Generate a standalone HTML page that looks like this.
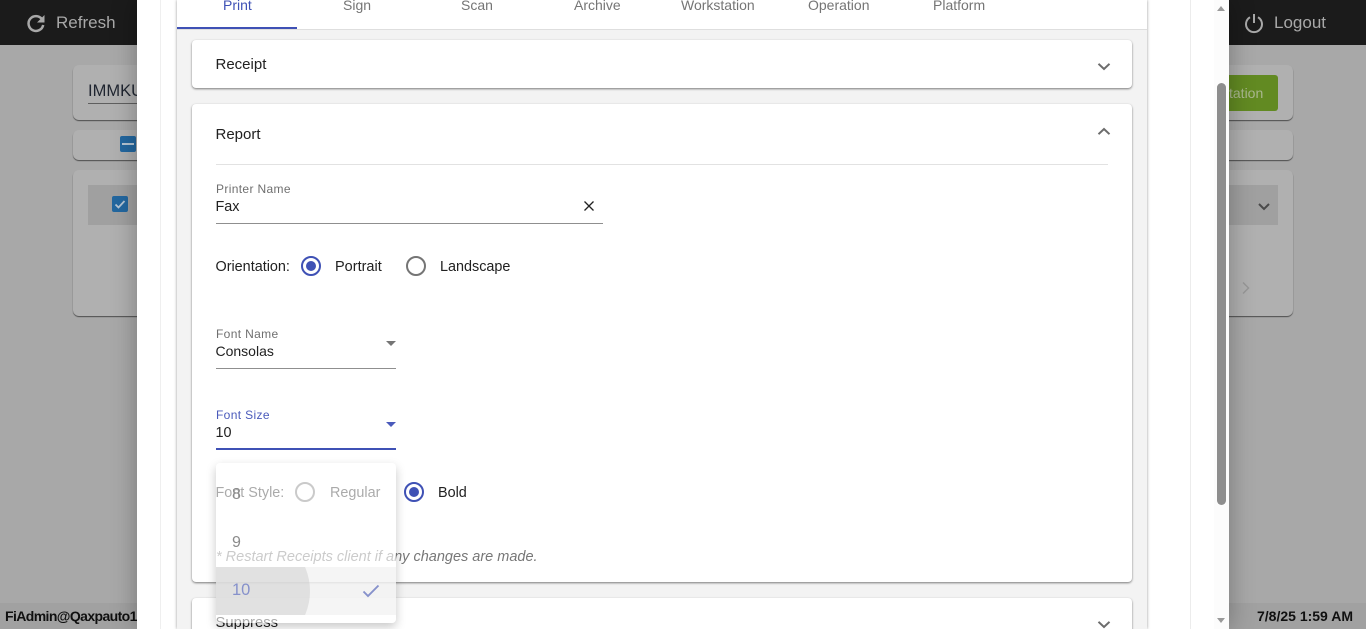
<!DOCTYPE html>
<html>
<head>
<meta charset="utf-8">
<style>
html,body{margin:0;padding:0;width:1366px;height:629px;overflow:hidden;background:#a8a8a8;}
body{position:relative;font-family:"Liberation Sans",sans-serif;color:#212121;font-size:14.4px;}
.a{position:absolute;}
.t{position:absolute;white-space:nowrap;line-height:18px;}
.card{position:absolute;background:#fff;border-radius:4px;box-shadow:0 1px 2px rgba(0,0,0,.5);}
.bgcard{position:absolute;background:#b0b0b0;border-radius:6px;box-shadow:0 1px 1px rgba(0,0,0,.55);}
.tab{position:absolute;top:-4px;white-space:nowrap;line-height:18px;color:#757575;font-size:14px;}
.lab{position:absolute;white-space:nowrap;font-size:12px;line-height:14px;color:#6f6f6f;letter-spacing:.35px;}
svg{position:absolute;overflow:visible;}
</style>
</head>
<body>
<!-- background app -->
<div class="a" style="left:0;top:0;width:1366px;height:45px;background:#1b1b1b;"></div>
<svg style="left:26px;top:13px" width="20" height="20" viewBox="0 0 20 20" fill="none"><path d="M15.800 6A7.400 7.400 0 1 0 17.200 12" stroke="#a8a8a8" stroke-width="2.500"/><path d="M18.500 2V9.500H11Z" fill="#a8a8a8"/></svg>
<div class="t" style="left:56px;top:14px;font-size:17px;color:#a8a8a8;">Refresh</div>
<svg style="left:1244px;top:13px" width="20" height="20" viewBox="0 0 20 20" fill="none"><path d="M10 1V10" stroke="#a8a8a8" stroke-width="2"/><path d="M6 4.200A8 8 0 1 0 14 4.200" stroke="#a8a8a8" stroke-width="2"/></svg>
<div class="t" style="left:1274px;top:14px;font-size:17px;color:#a8a8a8;">Logout</div>

<div class="bgcard" style="left:73px;top:65px;width:1220px;height:55px;"></div>
<div class="t" style="left:88px;top:82px;font-size:16.500px;color:#1f2530;">IMMKU</div>
<div class="a" style="left:88px;top:103px;width:60px;height:1px;background:#5f5f5f;"></div>
<div class="a" style="left:1200px;top:75px;width:78px;height:36px;background:#628a22;border-radius:3px;"></div>
<div class="t" style="left:1229px;top:84px;font-size:14px;color:#a9b78f;">tation</div>

<div class="bgcard" style="left:73px;top:130px;width:1220px;height:30px;"></div>
<div class="a" style="left:120px;top:136px;width:16px;height:16px;background:#23679f;border-radius:2px;"></div>
<div class="a" style="left:122px;top:143px;width:12px;height:2px;background:#b5c5d3;"></div>

<div class="bgcard" style="left:73px;top:170px;width:1220px;height:146px;"></div>
<div class="a" style="left:88px;top:185px;width:1190px;height:40px;background:#a0a0a0;"></div>
<div class="a" style="left:112px;top:196px;width:16px;height:16px;background:#23679f;border-radius:2px;"></div>
<svg style="left:112px;top:196px" width="16" height="16" viewBox="0 0 16 16" fill="none"><path d="M3.500 8.500L6.500 11.500L12.500 5" stroke="#b5c5d3" stroke-width="1.800"/></svg>
<svg style="left:1257px;top:202px" width="14" height="10" viewBox="0 0 14 10" fill="none"><path d="M2 2L7 7L12 2" stroke="#4a4a4a" stroke-width="2"/></svg>
<svg style="left:1241px;top:281px" width="10" height="14" viewBox="0 0 10 14" fill="none"><path d="M2 1.500L7.500 7L2 12.500" stroke="#979797" stroke-width="1.500"/></svg>

<div class="a" style="left:0;top:603px;width:1366px;height:26px;background:rgba(0,0,0,.04);"></div>
<div class="t" style="left:5px;top:607px;font-size:14px;font-weight:bold;color:#101010;letter-spacing:-.6px;">FiAdmin@Qaxpauto1.</div>
<div class="t" style="left:1257px;top:607px;font-size:14px;font-weight:bold;color:#101010;letter-spacing:0;">7/8/25 1:59 AM</div>

<!-- dialog -->
<div class="a" style="left:137px;top:0;width:1092px;height:629px;background:#fff;box-shadow:0 0 24px rgba(0,0,0,.3);"></div>
<div class="a" style="left:160px;top:0;width:1px;height:629px;background:#efefef;"></div>
<div class="a" style="left:1190px;top:0;width:1px;height:629px;background:#ececec;"></div>
<!-- scrollbar -->
<div class="a" style="left:1214px;top:0;width:15px;height:629px;background:#fcfcfc;"></div>
<div class="a" style="left:1217px;top:83px;width:9px;height:422px;background:#8e8e8e;border-radius:5px;"></div>
<div class="a" style="left:1217px;top:6px;width:0;height:0;border-left:4.500px solid transparent;border-right:4.500px solid transparent;border-bottom:5px solid #9a9a9a;"></div>
<div class="a" style="left:1217px;top:618px;width:0;height:0;border-left:4.500px solid transparent;border-right:4.500px solid transparent;border-top:5px solid #9a9a9a;"></div>

<!-- panel -->
<div class="a" style="left:177px;top:0;width:970px;height:629px;background:#f3f3f3;box-shadow:0 0 3px rgba(0,0,0,.4);"></div>
<div class="a" style="left:177px;top:0;width:970px;height:29px;background:#fff;border-bottom:1px solid #dedede;"></div>
<div class="a" style="left:177px;top:27px;width:120px;height:2px;background:#3f51b5;"></div>
<div class="tab" style="left:223px;color:#3f51b5;">Print</div>
<div class="tab" style="left:343px;">Sign</div>
<div class="tab" style="left:461px;">Scan</div>
<div class="tab" style="left:574px;">Archive</div>
<div class="tab" style="left:681px;">Workstation</div>
<div class="tab" style="left:808px;">Operation</div>
<div class="tab" style="left:933px;">Platform</div>

<!-- receipt -->
<div class="card" style="left:192px;top:40px;width:940px;height:48px;"></div>
<div class="t" style="left:215.500px;top:56px;font-size:15px;">Receipt</div>
<svg style="left:1097px;top:62px" width="14" height="10" viewBox="0 0 14 10" fill="none"><path d="M1.500 1.800L7 7L12.500 1.800" stroke="#6c6c6c" stroke-width="2"/></svg>

<!-- report -->
<div class="card" style="left:192px;top:104px;width:940px;height:478px;"></div>
<div class="t" style="left:215.500px;top:126px;font-size:15px;">Report</div>
<svg style="left:1097px;top:127px" width="14" height="10" viewBox="0 0 14 10" fill="none"><path d="M1.500 7.200L7 2L12.500 7.200" stroke="#6c6c6c" stroke-width="2"/></svg>
<div class="a" style="left:216px;top:164px;width:892px;height:1px;background:#e2e2e2;"></div>

<div class="lab" style="left:216px;top:182px;">Printer Name</div>
<div class="t" style="left:215.500px;top:198px;">Fax</div>
<svg style="left:583px;top:200px" width="12" height="12" viewBox="0 0 12 12" fill="none"><path d="M1.500 1.500L10.500 10.500M10.500 1.500L1.500 10.500" stroke="#222" stroke-width="1.300"/></svg>
<div class="a" style="left:216px;top:223px;width:387px;height:1px;background:#8f8f8f;"></div>

<div class="t" style="left:215.500px;top:258px;">Orientation:</div>
<svg style="left:301px;top:256px" width="20" height="20" viewBox="0 0 20 20" fill="none"><circle cx="10" cy="10" r="9" stroke="#3f51b5" stroke-width="2"/><circle cx="10" cy="10" r="5" fill="#3f51b5"/></svg>
<div class="t" style="left:335px;top:258px;font-size:14.500px;">Portrait</div>
<svg style="left:406px;top:256px" width="20" height="20" viewBox="0 0 20 20" fill="none"><circle cx="10" cy="10" r="9" stroke="#757575" stroke-width="2"/></svg>
<div class="t" style="left:440px;top:258px;">Landscape</div>

<div class="lab" style="left:216px;top:327px;">Font Name</div>
<div class="t" style="left:215.500px;top:342px;font-size:14px;">Consolas</div>
<div class="a" style="left:386px;top:341px;width:0;height:0;border-left:5px solid transparent;border-right:5px solid transparent;border-top:5px solid #757575;"></div>
<div class="a" style="left:216px;top:368px;width:180px;height:1px;background:#8f8f8f;"></div>

<div class="lab" style="left:216px;top:408px;color:#4a5abb;">Font Size</div>
<div class="t" style="left:215.500px;top:424px;">10</div>
<div class="a" style="left:386px;top:422px;width:0;height:0;border-left:5px solid transparent;border-right:5px solid transparent;border-top:5px solid #4a5abb;"></div>
<div class="a" style="left:216px;top:448px;width:180px;height:2px;background:#3f51b5;"></div>

<div class="t" style="left:215.500px;top:484px;">Font Style:</div>
<svg style="left:295px;top:482px" width="20" height="20" viewBox="0 0 20 20" fill="none"><circle cx="10" cy="10" r="9" stroke="#757575" stroke-width="2"/></svg>
<div class="t" style="left:330px;top:484px;">Regular</div>
<svg style="left:404px;top:482px" width="20" height="20" viewBox="0 0 20 20" fill="none"><circle cx="10" cy="10" r="9" stroke="#3f51b5" stroke-width="2"/><circle cx="10" cy="10" r="5" fill="#3f51b5"/></svg>
<div class="t" style="left:438px;top:484px;">Bold</div>
<div class="t" style="left:216px;top:548px;font-style:italic;color:#777;font-size:14.500px;">* Restart Receipts client if any changes are made.</div>

<!-- suppress -->
<div class="card" style="left:192px;top:598px;width:940px;height:60px;"></div>
<div class="t" style="left:215.500px;top:614px;font-size:14.800px;">Suppress</div>
<svg style="left:1097px;top:620px" width="14" height="10" viewBox="0 0 14 10" fill="none"><path d="M1.500 1.800L7 7L12.500 1.800" stroke="#6c6c6c" stroke-width="2"/></svg>

<!-- dropdown (semi-transparent, fading in) -->
<div class="a" style="left:216px;top:463px;width:180px;height:160px;background:rgba(255,255,255,.62);border-radius:4px;box-shadow:0 4px 10px rgba(0,0,0,.22);overflow:hidden;">
  <div class="a" style="left:0;top:104px;width:180px;height:48px;background:rgba(238,238,238,.6);overflow:hidden;">
    <div class="a" style="left:-26px;top:-36px;width:120px;height:120px;background:rgba(190,190,190,.35);border-radius:50%;"></div>
  </div>
  <div class="t" style="left:16px;top:23px;font-size:16px;color:#8a8a8a;">8</div>
  <div class="t" style="left:16px;top:71px;font-size:16px;color:#8a8a8a;">9</div>
  <div class="t" style="left:16px;top:118px;font-size:16.500px;color:#8691cb;">10</div>
  <svg style="left:146px;top:120px" width="18" height="16" viewBox="0 0 18 16" fill="none"><path d="M1.500 8.500L6 13L16.500 2.500" stroke="#8691cb" stroke-width="1.900"/></svg>
</div>
</body>
</html>
